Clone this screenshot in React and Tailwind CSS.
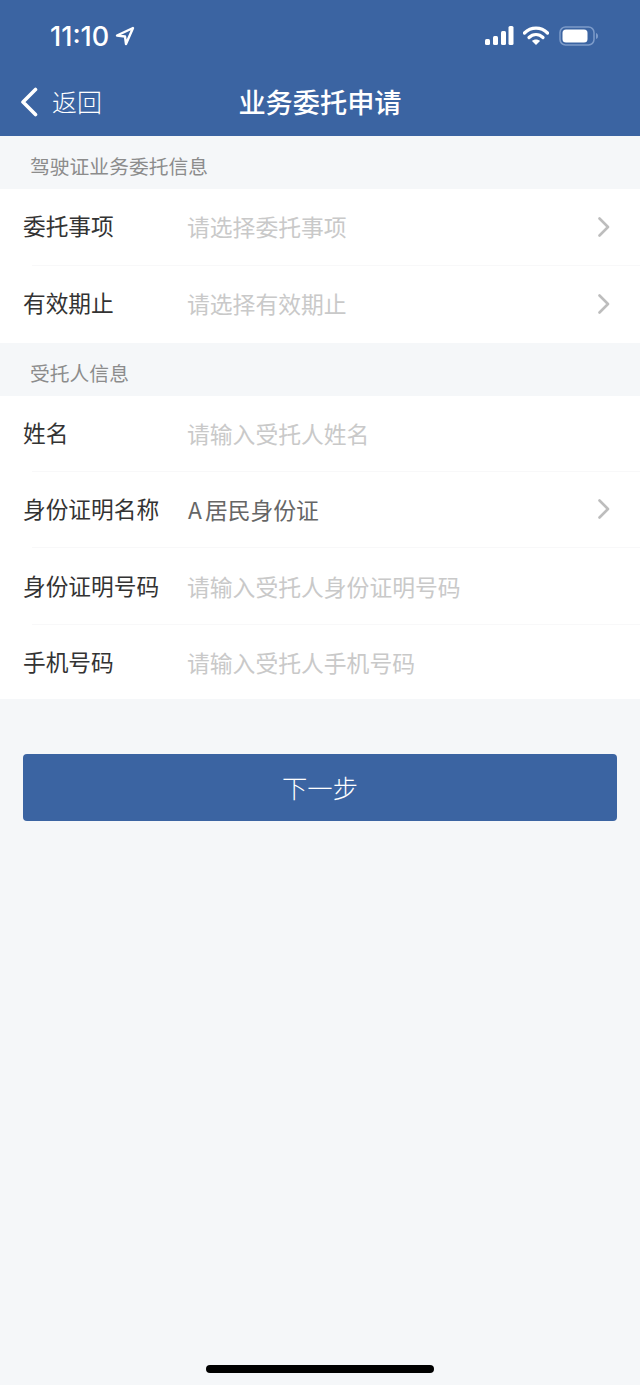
import React from 'react';

const fontStack = "font-['Noto_Sans_CJK_SC','Noto_Sans',sans-serif]";

function Chevron() {
  return (
    <svg width="14" height="20" viewBox="0 0 14 20" fill="none" className="absolute right-[29px] top-1/2 -translate-y-[11px]">
      <path d="M2.5 1.5 L11 10 L2.5 18.5" stroke="#bdbdbd" strokeWidth="2.6" strokeLinecap="round" strokeLinejoin="round" />
    </svg>
  );
}

function Row({ label, value, placeholder, arrow, border = true, height = 'h-[77px]' }) {
  return (
    <div className={`relative flex items-center ${height} pl-[23px]`}>
      <span className="w-[164px] shrink-0 text-[22.7px] leading-none text-[#333333] -translate-y-px">{label}</span>
      <span className={`text-[22.8px] leading-none ${value ? 'ml-px text-[#666666]' : 'text-[#c9c9c9]'}`}>{value || placeholder}</span>
      {arrow && <Chevron />}
      {border && <div className="absolute bottom-0 left-[32px] right-0 h-px bg-[#f8f8f9]" />}
    </div>
  );
}

function SectionTitle({ children }) {
  return (
    <div className="flex h-[53px] items-center pl-[30px] pt-[7px] text-[19.8px] leading-none text-[#8c8c8c]">{children}</div>
  );
}

export default function App() {
  return (
    <div className={`flex h-[1385px] w-[640px] flex-col overflow-hidden bg-[#f5f7f9] ${fontStack}`}>
      {/* Status bar and title */}
      <header className="h-[136px] shrink-0 bg-[#3b64a2] text-white">
        <div className="flex h-[72px] items-center justify-between pl-[50px] pr-[41px]">
          <div className="flex items-center gap-[6px]">
            <span className="font-['Inter',sans-serif] text-[27px] font-medium leading-none">11:10</span>
            <svg width="20" height="20" viewBox="0 0 20 20" fill="none">
              <path d="M18 2 L2 9.5 L10 10.5 L11 18 Z" stroke="white" strokeWidth="2.4" strokeLinejoin="round" />
            </svg>
          </div>
          <div className="flex items-center gap-[9px]">
            <svg width="30" height="20" viewBox="0 0 30 20" fill="white">
              <rect x="1" y="13" width="5" height="6" rx="1.5" />
              <rect x="9" y="10" width="5" height="9" rx="1.5" />
              <rect x="17" y="5" width="5" height="14" rx="1.5" />
              <rect x="24.5" y="0" width="5" height="19" rx="1.5" />
            </svg>
            <svg width="26" height="20" viewBox="0 0 26 20" fill="none">
              <path d="M1.5 7 C8 0.5 18 0.5 24.5 7" stroke="white" strokeWidth="3.2" strokeLinecap="round" />
              <path d="M6 11.5 C10 7.5 16 7.5 20 11.5" stroke="white" strokeWidth="3.2" strokeLinecap="round" />
              <path d="M9 15 L13 19 L17 15 C15 13 11 13 9 15 Z" fill="white" />
            </svg>
            <svg width="40" height="20" viewBox="0 0 40 20" fill="none" className="ml-px">
              <rect x="1" y="1" width="34" height="18" rx="5.5" stroke="#7d9bc9" strokeWidth="1.5" />
              <rect x="3.5" y="3.5" width="25" height="13" rx="3.5" fill="white" />
              <path d="M37 7 C38.5 7.5 39 8.5 39 10 C39 11.5 38.5 12.5 37 13 Z" fill="#7d9bc9" />
            </svg>
          </div>
        </div>
        <div className="relative flex h-[64px] items-center justify-center">
          <div className="absolute left-[20px] top-[15px] flex items-center gap-[14px]">
            <svg width="18" height="30" viewBox="0 0 18 30" fill="none">
              <path d="M15.5 2.5 L3 15 L15.5 27.5" stroke="white" strokeWidth="3.6" strokeLinecap="round" strokeLinejoin="round" />
            </svg>
            <span className="text-[25px] font-light leading-none -translate-y-px">返回</span>
          </div>
          <h1 className="text-[27.2px] font-medium leading-none -translate-y-[2px]">业务委托申请</h1>
        </div>
      </header>

      <SectionTitle>驾驶证业务委托信息</SectionTitle>
      <div className="bg-white">
        <Row label="委托事项" placeholder="请选择委托事项" arrow />
        <Row label="有效期止" placeholder="请选择有效期止" arrow border={false} />
      </div>

      <SectionTitle>受托人信息</SectionTitle>
      <div className="bg-white">
        <Row label="姓名" placeholder="请输入受托人姓名" height="h-[76px]" />
        <Row label="身份证明名称" value={<><span className="mr-[3px]">A</span>居民身份证</>} arrow height="h-[76px]" />
        <Row label="身份证明号码" placeholder="请输入受托人身份证明号码" height="h-[77px] pt-[2px]" />
        <Row label="手机号码" placeholder="请输入受托人手机号码" border={false} height="h-[74px] pt-[2px]" />
      </div>

      <button className="mx-[23px] mt-[55px] flex h-[67px] items-center justify-center rounded-[4px] bg-[#3b64a2] text-[25.3px] font-light text-white">
        下一步
      </button>

      <div className="mt-auto mb-[12px] h-[8px] w-[228px] self-center rounded-full bg-black" />
    </div>
  );
}
